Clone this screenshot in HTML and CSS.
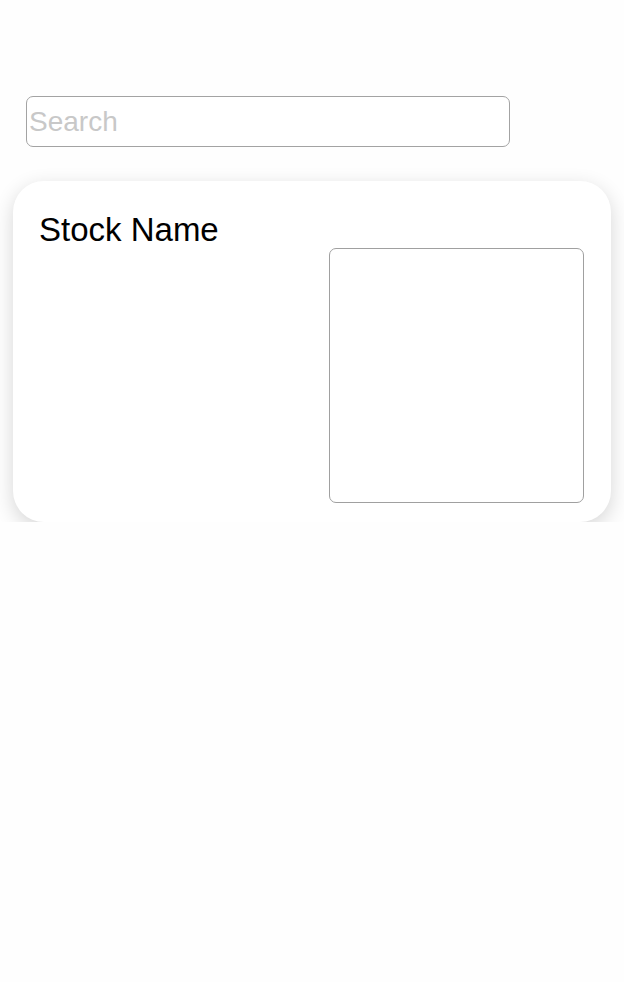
FILE: index.html
```html
<!DOCTYPE html>
<html>
<head>
<meta charset="utf-8">
<link rel="stylesheet" href="styles.css">
</head>
<body>
<main class="page">
  <input class="search" type="text" placeholder="Search">
  <section class="card">
    <h2 class="card-title">Stock Name</h2>
    <div class="chart-box"></div>
  </section>
</main>
</body>
</html>
```
FILE: styles.css
```css
html, body {
  margin: 0;
  padding: 0;
  background: #fefefe;
}
.page {
  display: flex;
  flex-direction: column;
  padding: 96px 13px 0 13px;
  font-family: "Liberation Sans", Arial, sans-serif;
}
.search {
  box-sizing: border-box;
  margin: 0 101px 0 13px;
  width: 484px;
  height: 51px;
  border: 1px solid #a3a3a3;
  border-radius: 7px;
  padding: 0 2px;
  font-family: "Liberation Sans", Arial, sans-serif;
  font-size: 28px;
  color: #000;
  background: #fff;
  outline: none;
}
.search::placeholder {
  color: #c8c8c8;
}
.card {
  margin-top: 34px;
  width: 598px;
  box-sizing: border-box;
  background: #fff;
  border-radius: 31px;
  padding: 31px 27px 19px 26px;
  box-shadow: 0 6px 20px rgba(0, 0, 0, 0.16);
  display: flex;
  flex-direction: column;
}
.card-title {
  margin: 0;
  font-size: 33px;
  font-weight: 400;
  line-height: 36px;
  color: #000;
}
.chart-box {
  align-self: flex-end;
  box-sizing: border-box;
  width: 255px;
  height: 255px;
  border: 1px solid #a0a0a0;
  border-radius: 7px;
}
```
